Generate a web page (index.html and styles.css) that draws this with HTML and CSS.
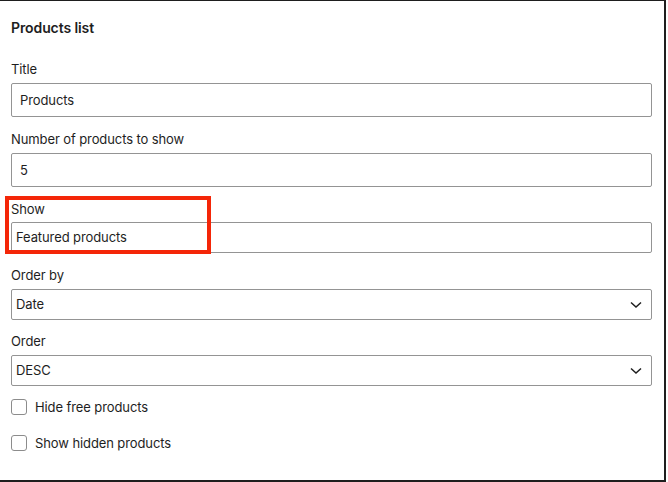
FILE: index.html
```html
<!DOCTYPE html>
<html>
<head>
<meta charset="utf-8">
<link rel="stylesheet" href="styles.css">
</head>
<body>
<div class="panel">
  <h2 class="heading">Products list</h2>
  <div class="field">
    <label class="label">Title</label>
    <div class="input">Products</div>
  </div>
  <div class="field">
    <label class="label">Number of products to show</label>
    <div class="input">5</div>
  </div>
  <div class="field field-show">
    <label class="label">Show</label>
    <div class="input input-plain">Featured products</div>
    <div class="highlight"></div>
  </div>
  <div class="field">
    <label class="label">Order by</label>
    <div class="select">Date
      <svg class="chev" width="12" height="8" viewBox="0 0 12 8"><path d="M1 1.5 L6 6 L11 1.5" fill="none" stroke="#1e1e1e" stroke-width="1.5"/></svg>
    </div>
  </div>
  <div class="field field-order">
    <label class="label">Order</label>
    <div class="select">DESC
      <svg class="chev" width="12" height="8" viewBox="0 0 12 8"><path d="M1 1.5 L6 6 L11 1.5" fill="none" stroke="#1e1e1e" stroke-width="1.5"/></svg>
    </div>
  </div>
  <div class="check check-first"><span class="box"></span><span class="check-label">Hide free products</span></div>
  <div class="check check-second"><span class="box"></span><span class="check-label">Show hidden products</span></div>
</div>
</body>
</html>
```
FILE: styles.css
```css
html, body {
  margin: 0;
  padding: 0;
  background: #ffffff;
}
body {
  font-family: Inter, "Noto Sans", "Liberation Sans", sans-serif;
  color: #1e1e1e;
  letter-spacing: -0.1px;
}
.panel {
  box-sizing: border-box;
  width: 666px;
  height: 482px;
  border-top: 1px solid #1e1e1e;
  border-right: 2px solid #1e1e1e;
  border-bottom: 2px solid #1e1e1e;
  padding: 17px 12px 0 11px;
  display: flex;
  flex-direction: column;
}
.heading {
  margin: 0;
  font-size: 14px;
  font-weight: 600;
  line-height: 20px;
}
.field {
  display: flex;
  flex-direction: column;
  position: relative;
}
.heading + .field { margin-top: 23px; }
.field + .field { margin-top: 14px; }
.field-order { margin-top: 13px !important; }
.label {
  font-size: 13px;
  line-height: 16px;
  margin-bottom: 6px;
}
.input {
  box-sizing: border-box;
  height: 34px;
  border: 1px solid #949494;
  border-radius: 2px;
  padding: 0 8px;
  font-size: 13px;
  line-height: 32px;
}
.input-plain {
  height: 31px;
  line-height: 29px;
  padding-left: 4px;
  margin-top: -1px;
}
.select {
  box-sizing: border-box;
  height: 31px;
  border: 1px solid #949494;
  border-radius: 2px;
  padding: 0 4px;
  font-size: 13px;
  line-height: 29px;
  display: flex;
  justify-content: space-between;
  align-items: center;
}
.chev { margin-right: 5px; }
.highlight {
  position: absolute;
  left: -6px;
  top: -5px;
  width: 206px;
  height: 58px;
  box-sizing: border-box;
  border: 4px solid #f42608;
}
.check {
  display: flex;
  align-items: center;
  gap: 8px;
  font-size: 13px;
  line-height: 16px;
}
.check-first { margin-top: 13px; }
.check-second { margin-top: 20px; }
.box {
  box-sizing: border-box;
  width: 16px;
  height: 16px;
  border: 1px solid #8c8c8c;
  border-radius: 3px;
}
```
